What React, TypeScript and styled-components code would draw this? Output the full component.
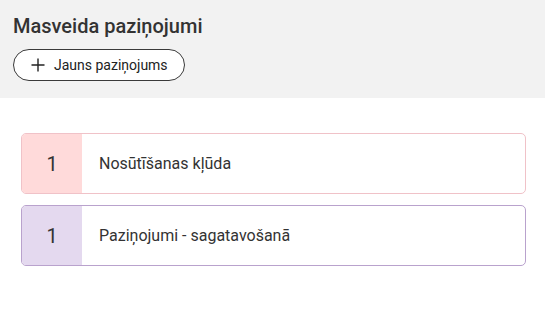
import React from 'react';
import styled, { createGlobalStyle } from 'styled-components';

const GlobalStyle = createGlobalStyle`
  html, body {
    margin: 0;
    padding: 0;
    background: #fff;
    font-family: Roboto, "Liberation Sans", sans-serif;
    color: #333;
  }
`;

const Header = styled.div`
  background: #f2f2f2;
  padding: 14px 13px 17px;
  display: flex;
  flex-direction: column;
  align-items: flex-start;
  gap: 11px;
`;

const Title = styled.h1`
  margin: 0;
  font-size: 20px;
  font-weight: 500;
  line-height: 24px;
  color: #333;
`;

const NewButton = styled.button`
  display: flex;
  align-items: center;
  gap: 9px;
  height: 32px;
  padding: 0 16px 0 17px;
  border: 1px solid #3a3a3a;
  border-radius: 16px;
  background: #fff;
  font-family: inherit;
  font-size: 14px;
  color: #222;
  cursor: pointer;
`;

const List = styled.div`
  padding: 35px 19px 0 21px;
  display: flex;
  flex-direction: column;
  gap: 11px;
`;

const Card = styled.div<{ $bg: string; $border: string }>`
  display: flex;
  height: 61px;
  box-sizing: border-box;
  border: 1px solid ${(p) => p.$border};
  border-radius: 5px;
  overflow: hidden;
  background: #fff;

  .count {
    background: ${(p) => p.$bg};
  }
`;

const Count = styled.div`
  width: 60px;
  flex-shrink: 0;
  display: flex;
  align-items: center;
  justify-content: center;
  font-size: 20px;
  color: #333;
`;

const Label = styled.div`
  display: flex;
  align-items: center;
  padding-left: 17px;
  font-size: 16px;
  color: #333;
`;

const items = [
  { count: 1, label: 'Nosūtīšanas kļūda', bg: '#ffdada', border: '#f0c2c8' },
  { count: 1, label: 'Paziņojumi - sagatavošanā', bg: '#e4d9ef', border: '#b9a2cd' },
];

export default function App() {
  return (
    <>
      <GlobalStyle />
      <Header>
        <Title>Masveida paziņojumi</Title>
        <NewButton>
          <svg width="14" height="14" viewBox="0 0 14 14">
            <path d="M7 0.5v13M0.5 7h13" stroke="#222" strokeWidth="1.4" fill="none" />
          </svg>
          Jauns paziņojums
        </NewButton>
      </Header>
      <List>
        {items.map((it) => (
          <Card key={it.label} $bg={it.bg} $border={it.border}>
            <Count className="count">{it.count}</Count>
            <Label>{it.label}</Label>
          </Card>
        ))}
      </List>
    </>
  );
}
